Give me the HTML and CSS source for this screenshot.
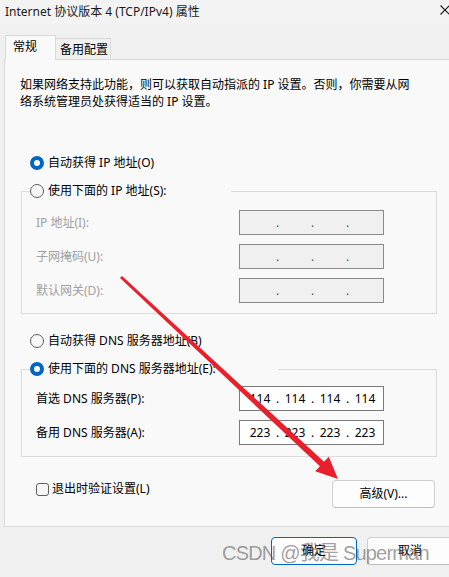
FILE: index.html
```html
<!DOCTYPE html>
<html lang="zh-CN">
<head>
<meta charset="utf-8">
<title>Internet 协议版本 4 (TCP/IPv4) 属性</title>
<link rel="stylesheet" href="styles.css">
</head>
<body>
<div class="window">
  <div class="titlebar">
    <span class="title">Internet 协议版本 4 (TCP/IPv4) 属性</span>
    <svg class="close" width="10" height="10" viewBox="0 0 10 10"><path d="M0.5 0.5 L9.5 9.5 M9.5 0.5 L0.5 9.5" stroke="#1a1a1a" stroke-width="1.1" fill="none"/></svg>
  </div>
  <div class="tabs">
    <div class="tab active">常规</div>
    <div class="tab">备用配置</div>
  </div>
  <div class="panel">
    <p class="desc">如果网络支持此功能，则可以获取自动指派的 IP 设置。否则，你需要从网<br>络系统管理员处获得适当的 IP 设置。</p>

    <div class="radio-row first"><span class="radio checked"></span><span>自动获得 IP 地址(O)</span></div>

    <fieldset class="group group-ip">
      <legend class="radio-row legend-ip"><span class="radio"></span><span>使用下面的 IP 地址(S):</span></legend>
      <div class="grid">
        <span class="lbl disabled">IP 地址(I):</span>
        <div class="ipbox off"><span></span><i>.</i><span></span><i>.</i><span></span><i>.</i><span></span></div>
        <span class="lbl disabled">子网掩码(U):</span>
        <div class="ipbox off"><span></span><i>.</i><span></span><i>.</i><span></span><i>.</i><span></span></div>
        <span class="lbl disabled">默认网关(D):</span>
        <div class="ipbox off"><span></span><i>.</i><span></span><i>.</i><span></span><i>.</i><span></span></div>
      </div>
    </fieldset>

    <div class="radio-row dns-auto"><span class="radio"></span><span>自动获得 DNS 服务器地址(B)</span></div>

    <fieldset class="group group-dns">
      <legend class="radio-row legend-dns"><span class="radio checked"></span><span>使用下面的 DNS 服务器地址(E):</span></legend>
      <div class="grid">
        <span class="lbl">首选 DNS 服务器(P):</span>
        <div class="ipbox"><span>114</span><i>.</i><span>114</span><i>.</i><span>114</span><i>.</i><span>114</span></div>
        <span class="lbl">备用 DNS 服务器(A):</span>
        <div class="ipbox"><span>223</span><i>.</i><span>223</span><i>.</i><span>223</span><i>.</i><span>223</span></div>
      </div>
    </fieldset>

    <div class="check-row">
      <label class="check"><span class="box"></span><span>退出时验证设置(L)</span></label>
      <button class="btn adv">高级(V)...</button>
    </div>
  </div>
  <div class="footer">
    <button class="btn primary">确定</button>
    <button class="btn">取消</button>
  </div>
  <div class="watermark">CSDN @我是 Superman</div>
  <svg class="arrow" width="449" height="577" viewBox="0 0 449 577">
    <polygon fill="#e8202b" points="120.0,278.1 122.0,275.9 324.05,461.8 328.8,456.7 338,479 315.2,471.3 319.95,466.2"/>
  </svg>
</div>
</body>
</html>
```

FILE: styles.css
```css
* { box-sizing: border-box; }

html, body {
  margin: 0;
  padding: 0;
}

body {
  font-family: "Noto Sans", "Noto Sans CJK SC", sans-serif;
  font-size: 12px;
  color: #000;
  background: #f0f0f0;
}

.window {
  position: relative;
  width: 449px;
  height: 577px;
  overflow: hidden;
  background: #f0f0f0;
}

.titlebar {
  height: 24px;
  padding-left: 5px;
  display: flex;
  justify-content: space-between;
  align-items: center;
  background: #f3f3f3;
}

.title {
  line-height: 20px;
  color: #1a1a1a;
}

.close {
  align-self: flex-start;
  margin-top: 5px;
  margin-right: -1px;
}

.tabs {
  margin-top: 11px;
  height: 24px;
  padding-left: 5px;
  display: flex;
  align-items: flex-end;
}

.tab {
  height: 21px;
  width: 55px;
  padding: 1px 0 0 4px;
  line-height: 20px;
  border-top: 1px solid #dadada;
  border-right: 1px solid #dadada;
  background: #f0f0f0;
}

.tab.active {
  position: relative;
  z-index: 1;
  width: 51px;
  height: 25px;
  margin-bottom: -1px;
  padding-left: 7px;
  border-left: 1px solid #dadada;
  background: #f9f9f9;
}

.panel {
  margin-left: 4px;
  height: 468px;
  border-top: 1px solid #dadada;
  border-left: 1px solid #dadada;
  border-bottom: 1px solid #dadada;
  background: #f9f9f9;
}

.desc {
  margin: 0;
  padding: 16px 0 0 15px;
  line-height: 17px;
}

.radio-row {
  display: flex;
  align-items: center;
  height: 20px;
  line-height: 20px;
  padding-left: 25px;
}

.radio-row.first { margin-top: 43px; }
.radio-row.dns-auto { margin-top: 17px; }

.radio {
  width: 14px;
  height: 14px;
  border-radius: 50%;
  border: 1px solid #5f5f5f;
  background: #f6f6f6;
  margin-right: 4px;
  flex: none;
}

.radio.checked {
  border: 4.5px solid #0067c0;
  background: #fff;
}

.group {
  margin: 8px 0 0 16px;
  width: 416px;
  min-inline-size: 0;
  border: 1px solid #dcdcdc;
  padding: 9px 0 10px 8px;
}

.group-dns {
  padding-top: 7px;
  padding-bottom: 11px;
}

.group legend.radio-row {
  padding: 0;
  margin: 0;
}

.legend-ip { width: 201px; }
.legend-dns { width: 248px; }

.grid {
  display: grid;
  grid-template-columns: 203px 145px;
  grid-auto-rows: 25px;
  row-gap: 9px;
  padding-left: 6px;
  align-items: center;
}

.lbl { line-height: 20px; }
.lbl.disabled { color: #a0a0a0; }

.ipbox {
  height: 25px;
  border: 1px solid #7a7a7a;
  background: #fff;
  display: flex;
  align-items: center;
  padding-left: 7px;
  line-height: 20px;
}

.ipbox.off {
  background: #f0f0f0;
  border-color: #8a8a8a;
}

.ipbox span {
  width: 26px;
  text-align: center;
}

.ipbox i {
  font-style: normal;
  width: 9px;
  text-align: center;
}

.ipbox.off i { color: #555; }

.check-row {
  margin-top: 23px;
  height: 28px;
  padding: 0 14px 0 31px;
  display: flex;
  justify-content: space-between;
  align-items: flex-start;
}

.check {
  display: flex;
  align-items: center;
  height: 20px;
  margin-top: -1px;
  line-height: 20px;
}

.box {
  width: 13px;
  height: 13px;
  border: 1px solid #5f5f5f;
  border-radius: 3px;
  background: #f6f6f6;
  margin-right: 3px;
}

.btn {
  font: inherit;
  color: #000;
  height: 28px;
  width: 86px;
  border: 1px solid #d0d0d0;
  border-bottom-color: #bcbcbc;
  border-radius: 4px;
  background: #fdfdfd;
  padding: 0;
  line-height: 20px;
}

.btn.adv { width: 103px; }

.btn.primary {
  border: 1px solid #0067c0;
}

.footer {
  margin-top: 10px;
  display: flex;
  justify-content: flex-end;
  gap: 10px;
  margin-right: -4px;
}

.watermark {
  position: absolute;
  left: 222px;
  top: 540px;
  font-family: "Liberation Sans", "Noto Sans CJK SC", sans-serif;
  font-size: 20px;
  line-height: 26px;
  letter-spacing: -0.8px;
  color: rgba(80, 80, 80, 0.55);
  white-space: nowrap;
  pointer-events: none;
}

.arrow {
  position: absolute;
  left: 0;
  top: 0;
  pointer-events: none;
}
```
